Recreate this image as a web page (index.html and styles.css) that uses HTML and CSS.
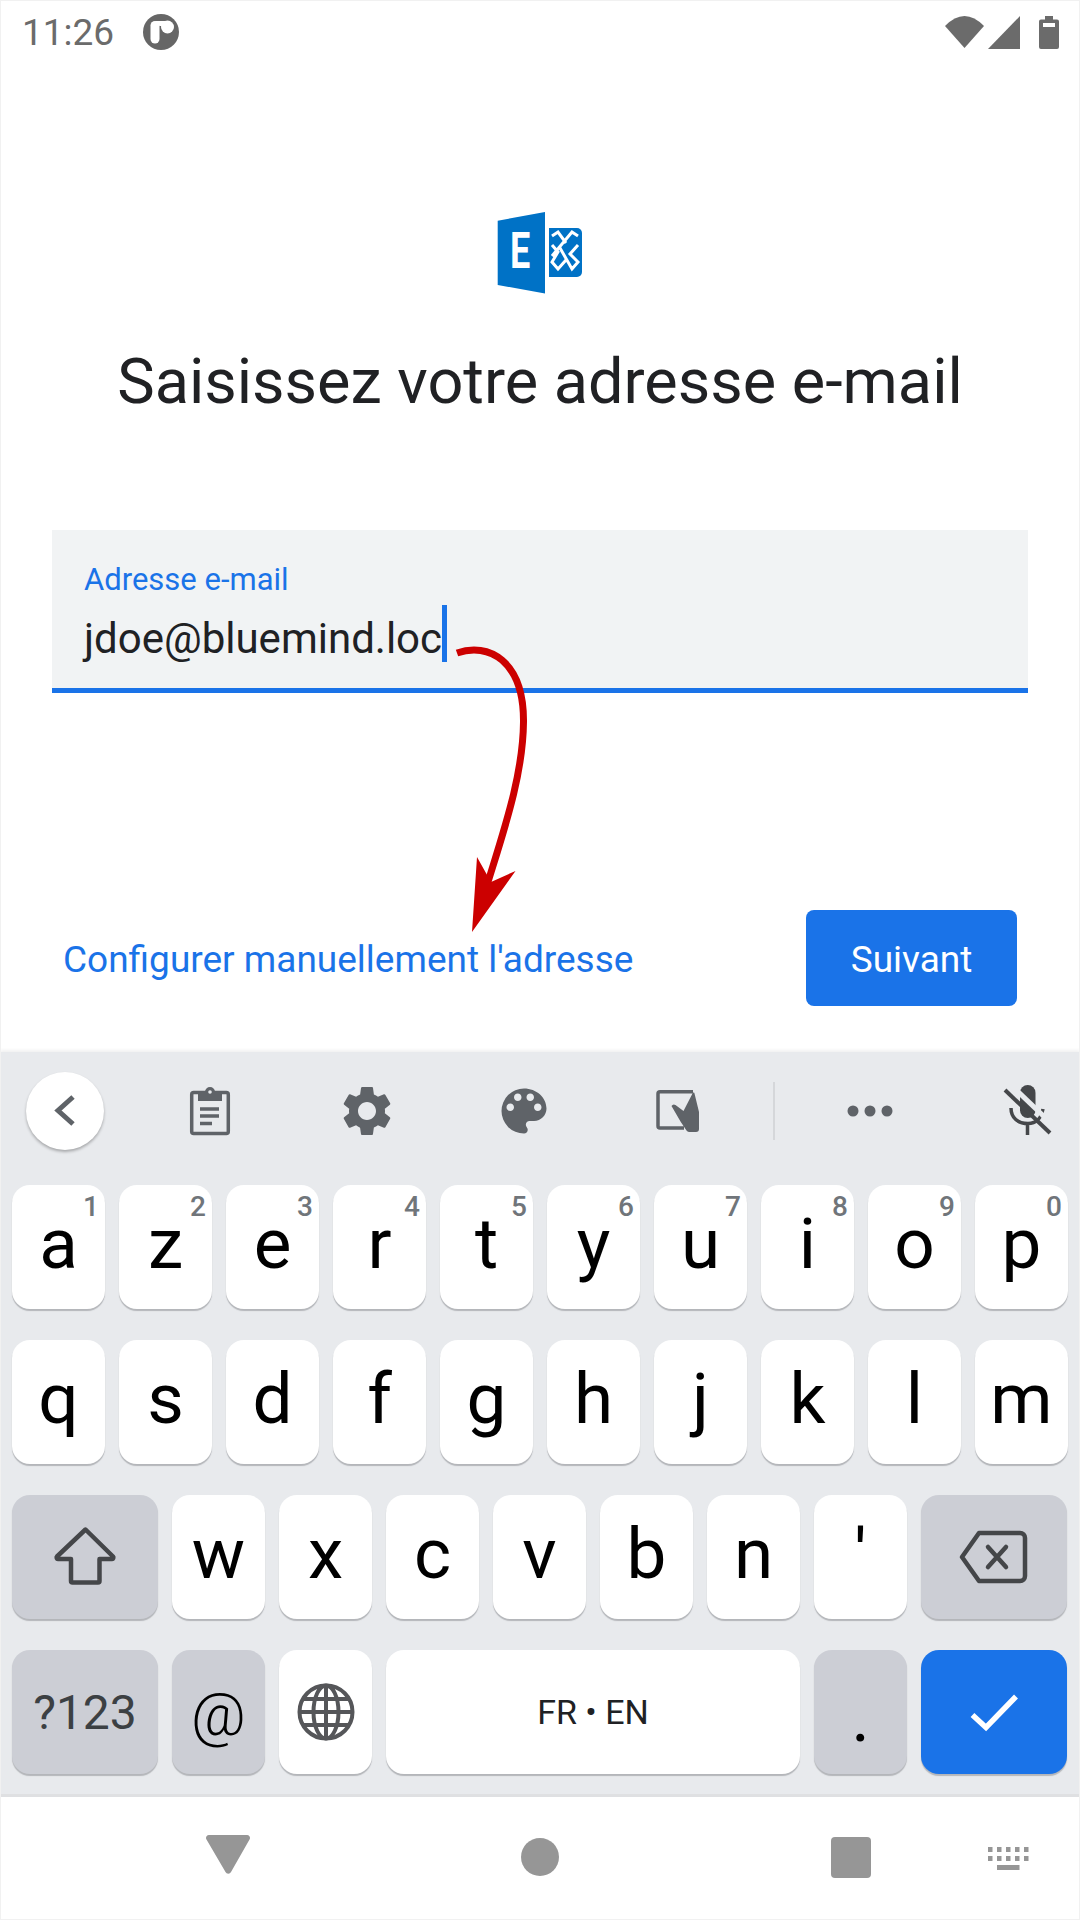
FILE: index.html
```html
<!DOCTYPE html>
<html lang="fr">
<head>
<meta charset="utf-8">
<title>Saisissez votre adresse e-mail</title>
<link rel="stylesheet" href="styles.css">
</head>
<body>
<div class="screen">
  <header class="status">
    <span class="time">11:26</span>
    <svg class="status-app" width="40" height="40" viewBox="141 12 40 40">
      <circle cx="161" cy="32" r="18" fill="#666"/>
      <rect x="150.500" y="21" width="9" height="22.500" rx="4.500" fill="#fff"/>
      <path d="M155 21h12v5h-7.500z" fill="#fff"/>
      <circle cx="167.500" cy="27" r="6.500" fill="#fff"/>
    </svg>
    <svg class="status-right" width="116" height="40" viewBox="944 10 116 40">
      <path d="M945 24Q964.500 4 984 24L964.500 46z" fill="#6b6b6b"/>
      <path d="M988 47L1020 14V47z" fill="#6b6b6b"/>
      <path d="M1045 14h8v3.500h4a2 2 0 0 1 2 2V45a2 2 0 0 1-2 2h-16a2 2 0 0 1-2-2V19.500a2 2 0 0 1 2-2h4z" fill="#6b6b6b"/>
      <rect x="1043" y="21" width="12" height="4" fill="#fff"/>
    </svg>
  </header>

  <main class="main">
    <svg class="logo" width="86" height="82" viewBox="497 212 86 82">
      <path d="M497.700 220.700L545 212V293.500L497.700 285z" fill="#0072c6"/>
      <text class="logo-e" transform="translate(510 268.400) scale(.72 1)">E</text>
      <path d="M549 228H577a5 5 0 0 1 5 5V272a5 5 0 0 1-5 5H549z" fill="#0072c6"/>
      <path d="M552 236L558 232L566 243M578 236L572 232L552 256M552 245L558 252L552 262L558 269L566 260M578 245L570 254L578 262L572 269L560 248" fill="none" stroke="#fff" stroke-width="3"/>
    </svg>
    <h1 class="title">Saisissez votre adresse e-mail</h1>

    <div class="field">
      <span class="field-label">Adresse e-mail</span>
      <div class="field-value">jdoe@bluemind.loc<span class="caret"></span></div>
    </div>

    <div class="actions">
      <a class="manual-link">Configurer manuellement l'adresse</a>
      <button class="next">Suivant</button>
    </div>
  </main>

  <section class="keyboard">
    <div class="toolbar">
      <div class="back">
        <svg width="40" height="40" viewBox="46 1091 40 40"><path d="M74 1097L59 1110.500L74 1124" fill="none" stroke="#5f6368" stroke-width="5"/></svg>
      </div>
      <svg class="tool tool-clip" width="60" height="60" viewBox="180 1081 60 60">
        <rect x="191.700" y="1092.500" width="36.600" height="41" rx="2" fill="none" stroke="#5f6368" stroke-width="3.500"/>
        <path d="M198 1092h7a5 5 0 0 1 10 0h7v9h-24z" fill="#5f6368"/>
        <circle cx="210" cy="1092" r="1.800" fill="#e8eaed"/>
        <path d="M200 1109h19M200 1116h19M200 1123.500h12" stroke="#5f6368" stroke-width="3.500"/>
      </svg>
      <svg class="tool" width="60" height="60" viewBox="0 0 24 24"><path fill="#5f6368" d="M19.140 12.940c.04-.3.06-.61.06-.94 0-.32-.02-.64-.07-.94l2.030-1.580c.18-.14.23-.41.12-.61l-1.920-3.320c-.12-.22-.37-.29-.59-.22l-2.390.96c-.5-.38-1.030-.7-1.620-.94l-.36-2.540c-.04-.24-.24-.41-.48-.41h-3.840c-.24 0-.43.17-.47.41l-.36 2.540c-.59.24-1.130.57-1.620.94l-2.390-.96c-.22-.08-.47 0-.59.22L2.740 8.870c-.12.21-.08.47.12.61l2.030 1.580c-.05.3-.09.63-.09.94s.02.64.07.94l-2.030 1.580c-.18.14-.23.41-.12.61l1.920 3.320c.12.22.37.29.59.22l2.390-.96c.5.38 1.030.7 1.620.94l.36 2.540c.05.24.24.41.48.41h3.840c.24 0 .44-.17.47-.41l.36-2.540c.59-.24 1.130-.56 1.620-.94l2.390.96c.22.08.47 0 .59-.22l1.920-3.320c.12-.22.07-.47-.12-.61l-2.010-1.580zM12 15.600c-1.980 0-3.600-1.620-3.600-3.600s1.620-3.600 3.600-3.600 3.600 1.620 3.600 3.600-1.620 3.600-3.600 3.600z"/></svg>
      <svg class="tool" width="60" height="60" viewBox="0 0 24 24"><path fill="#5f6368" d="M12 3a9 9 0 0 0 0 18c.83 0 1.500-.67 1.500-1.500 0-.39-.15-.74-.39-1.010-.23-.26-.38-.61-.38-.99 0-.83.67-1.500 1.500-1.500H16c2.760 0 5-2.240 5-5 0-4.420-4.030-8-9-8zm-5.500 9c-.83 0-1.500-.67-1.500-1.500S5.670 9 6.500 9 8 9.670 8 10.500 7.330 12 6.500 12zm3-4C8.670 8 8 7.330 8 6.500S8.670 5 9.500 5s1.500.67 1.500 1.500S10.330 8 9.500 8zm5 0c-.83 0-1.500-.67-1.500-1.500S13.670 5 14.500 5s1.500.67 1.500 1.500S15.330 8 14.500 8zm3 4c-.83 0-1.500-.67-1.500-1.500S16.670 9 17.500 9s1.500.67 1.500 1.500-.67 1.500-1.500 1.500z"/></svg>
      <svg class="tool tool-touch" width="60" height="60" viewBox="650 1081 60 60">
        <path d="M693 1091.700H660a2 2 0 0 0-2 2V1126a2 2 0 0 0 2 2H684" fill="none" stroke="#5f6368" stroke-width="3.500"/>
        <path d="M671.500 1106a3 3 0 0 1 4-1l8 6 9-17.500a1 1 0 0 1 2 0L699 1112V1129a3 3 0 0 1-3 3H689a3 3 0 0 1-2.500-1.500l-6-9z" fill="#5f6368"/>
      </svg>
      <span class="separator"></span>
      <svg class="tool tool-dots" width="60" height="60" viewBox="840 1081 60 60">
        <circle cx="853" cy="1111" r="5.500" fill="#5f6368"/><circle cx="870" cy="1111" r="5.500" fill="#5f6368"/><circle cx="887" cy="1111" r="5.500" fill="#5f6368"/>
      </svg>
      <svg class="tool tool-mic" width="60" height="60" viewBox="998 1081 60 60">
        <rect x="1020" y="1085" width="15.500" height="33" rx="7.700" fill="#45474a"/>
        <path d="M1011 1108c0 10 7 15.500 17 15.500 9 0 13-5 15-14.500M1027.500 1123v12" fill="none" stroke="#45474a" stroke-width="3.500"/>
        <path d="M1012 1086L1056 1128" stroke="#e8eaed" stroke-width="5"/>
        <path d="M1005 1090L1050 1133" stroke="#45474a" stroke-width="4"/>
      </svg>
    </div>

    <div class="rows">
      <div class="row">
        <div class="key">a<span class="hint">1</span></div>
        <div class="key">z<span class="hint">2</span></div>
        <div class="key">e<span class="hint">3</span></div>
        <div class="key">r<span class="hint">4</span></div>
        <div class="key">t<span class="hint">5</span></div>
        <div class="key">y<span class="hint">6</span></div>
        <div class="key">u<span class="hint">7</span></div>
        <div class="key">i<span class="hint">8</span></div>
        <div class="key">o<span class="hint">9</span></div>
        <div class="key">p<span class="hint">0</span></div>
      </div>
      <div class="row">
        <div class="key">q</div><div class="key">s</div><div class="key">d</div><div class="key">f</div><div class="key">g</div>
        <div class="key">h</div><div class="key">j</div><div class="key">k</div><div class="key">l</div><div class="key">m</div>
      </div>
      <div class="row">
        <div class="key key-wide key-fn">
          <svg width="70" height="70" viewBox="50 1521 70 70"><path d="M85.500 1528.500L57 1555.500a1.500 1.500 0 0 0 1 2.500H71V1580a1.500 1.500 0 0 0 1.500 1.500H98a1.500 1.500 0 0 0 1.500-1.500V1558H112a1.500 1.500 0 0 0 1-2.500z" fill="none" stroke="#444649" stroke-width="4.500" stroke-linejoin="round"/></svg>
        </div>
        <div class="key">w</div><div class="key">x</div><div class="key">c</div><div class="key">v</div><div class="key">b</div><div class="key">n</div>
        <div class="key key-apos">'</div>
        <div class="key key-wide key-fn">
          <svg width="76" height="70" viewBox="956 1524 76 70"><path d="M979 1535H1020a5 5 0 0 1 5 5V1578a5 5 0 0 1-5 5H979L962 1559z" fill="none" stroke="#444649" stroke-width="4.500" stroke-linejoin="round"/><path d="M988 1549L1006 1569M1006 1549L988 1569" stroke="#444649" stroke-width="4.500" stroke-linecap="round"/></svg>
        </div>
      </div>
      <div class="row">
        <div class="key key-wide key-fn key-sym">?123</div>
        <div class="key key-fn key-at">@</div>
        <div class="key key-icon">
          <svg width="60" height="60" viewBox="295 1681 60 60" fill="none" stroke="#555659" stroke-width="4">
            <circle cx="325" cy="1711" r="26.500"/><ellipse cx="325" cy="1711" rx="12.500" ry="26.500"/>
            <path d="M325 1685V1737M299 1711H351M303 1698H347M303 1724H347"/>
          </svg>
        </div>
        <div class="key key-space">FR • EN</div>
        <div class="key key-fn key-dot">.</div>
        <div class="key key-wide key-done">
          <svg width="60" height="50" viewBox="965 1686 60 50"><path d="M973.500 1714L987 1726.500L1017 1695.500" fill="none" stroke="#fff" stroke-width="5.500"/></svg>
        </div>
      </div>
    </div>
  </section>

  <nav class="nav">
    <svg class="nav-back" width="44" height="40" viewBox="206 1835 44 40"><path d="M209 1835H247a3 3 0 0 1 2.800 4L231 1872a3 3 0 0 1-5.500 0L206.200 1839a3 3 0 0 1 2.800-4z" fill="#969696"/></svg>
    <svg class="nav-home" width="38" height="38" viewBox="0 0 38 38"><circle cx="19" cy="19" r="19" fill="#969696"/></svg>
    <svg class="nav-recent" width="40" height="41" viewBox="0 0 40 41"><rect width="40" height="41" rx="4" fill="#969696"/></svg>
    <svg class="nav-kbd" width="41" height="24" viewBox="0 0 41 24" fill="#969696">
      <rect x="0" y="0" width="4.500" height="5"/><rect x="9" y="0" width="4.500" height="5"/><rect x="18" y="0" width="4.500" height="5"/><rect x="27" y="0" width="4.500" height="5"/><rect x="36" y="0" width="4.500" height="5"/>
      <rect x="0" y="9" width="4.500" height="5"/><rect x="9" y="9" width="4.500" height="5"/><rect x="18" y="9" width="4.500" height="5"/><rect x="27" y="9" width="4.500" height="5"/><rect x="36" y="9" width="4.500" height="5"/>
      <rect x="9" y="18" width="22.500" height="5"/>
    </svg>
  </nav>

  <svg class="annotation" width="90" height="300" viewBox="450 640 90 300">
    <path d="M457 653C488 642 524 660 523.500 722C523 775 504 830 488 882" fill="none" stroke="#cc0000" stroke-width="7"/>
    <path d="M477 857L491 882L515.500 871L472 932z" fill="#cc0000"/>
  </svg>
</div>
</body>
</html>
```
FILE: styles.css
```css
* { box-sizing: border-box; }
html, body { margin: 0; padding: 0; }
body { background: #fff; font-family: Roboto, "Liberation Sans", sans-serif; }

.screen {
  position: relative;
  width: 1080px;
  height: 1920px;
  display: flex;
  flex-direction: column;
  background: #fff;
  overflow: hidden;
  outline: 1px solid #f1f1f1;
  outline-offset: -1px;
}

.status {
  height: 64px;
  flex: none;
  display: flex;
  align-items: center;
  padding: 0 20px 0 22px;
}
.time { font-size: 37px; color: #6b6b6b; letter-spacing: 0; }
.status-app { margin-left: 27px; }
.status-right { margin-left: auto; }

.main {
  flex: 1;
  display: flex;
  flex-direction: column;
  align-items: stretch;
}
.logo { align-self: center; margin: 148px 0 0; }
.title {
  margin: 48px 0 0;
  text-align: center;
  font-size: 63px;
  font-weight: 400;
  line-height: 80px;
  color: #202124;
}
.field {
  margin: 108px 52px 0;
  height: 163px;
  background: #f1f3f4;
  border-bottom: 5px solid #1a73e8;
  padding: 31px 32px 0;
}
.field-label { display: block; font-size: 31px; line-height: 38px; color: #1a73e8; }
.field-value {
  display: flex;
  align-items: center;
  margin-top: 11px;
  font-size: 42px;
  line-height: 58px;
  color: #202124;
}
.caret { width: 5px; height: 57px; background: #1a73e8; margin-top: -12px; }

.actions {
  margin: 217px 63px 0 63px;
  display: flex;
  align-items: center;
  justify-content: space-between;
}
.manual-link { font-size: 37px; color: #1a73e8; margin-top: 2px; }
.next {
  width: 211px;
  height: 96px;
  border: 0;
  border-radius: 8px;
  background: #1a73e8;
  color: #fff;
  font-family: inherit;
  font-size: 37px;
  font-weight: 400;
  padding: 2px 0 0;
}

.keyboard {
  flex: none;
  height: 745px;
  background: #e8eaed;
  border-bottom: 3px solid #dfe0e2;
  box-shadow: 0 -2px 3px rgba(0, 0, 0, .06);
}
.toolbar {
  height: 118px;
  display: flex;
  align-items: center;
  padding-left: 26px;
}
.back {
  width: 78px;
  height: 78px;
  border-radius: 50%;
  background: #fff;
  box-shadow: 0 2px 3px rgba(0, 0, 0, .28);
  display: flex;
  align-items: center;
  justify-content: center;
}
.tool { margin-left: 97px; flex: none; }
.tool-clip { margin-left: 76px; }
.tool-touch { margin-left: 96px; }
.tool-dots { margin-left: 65px; }
.tool-mic { margin-left: 98px; }
.separator { width: 2px; height: 58px; margin-left: 63px; background: #d5d7da; }

.rows {
  margin-top: 15px;
  padding: 0 12px;
  display: flex;
  flex-direction: column;
  gap: 31px;
}
.row { display: flex; gap: 14px; }
.key {
  position: relative;
  flex: none;
  width: 93px;
  height: 124px;
  padding-top: 23px;
  border-radius: 18px;
  background: #fff;
  box-shadow: 0 2px 1px #b4b6ba;
  display: flex;
  justify-content: center;
  font-size: 71px;
  line-height: 71px;
  color: #000;
}
.hint {
  position: absolute;
  top: 6px;
  right: 6px;
  font-size: 28px;
  line-height: 32px;
  font-weight: 500;
  color: #70757a;
}
.key-wide { width: 146px; }
.key-fn { background: #ccced5; }
.key-wide.key-fn, .key-icon, .key-done { padding-top: 0; align-items: center; }
.key-sym { font-size: 48px; color: #3c4043; }
.key-at { font-size: 60px; font-weight: 300; padding-top: 29px; }
.key-space {
  width: 414px;
  padding-top: 0;
  align-items: center;
  font-size: 34px;
  color: #202124;
}
.key-dot { padding-top: 31px; }
.key-done { background: #1a73e8; }

.nav {
  flex: none;
  height: 123px;
  display: flex;
  align-items: center;
  padding-left: 206px;
}
.nav-back { margin-top: -8px; }
.nav-home { margin-left: 271px; margin-top: -3px; }
.nav-recent { margin-left: 272px; margin-top: -3px; }
.nav-kbd { margin-left: 117px; }

.annotation { position: absolute; left: 450px; top: 640px; }
.logo-e { font: 700 50px Roboto, "Liberation Sans", sans-serif; fill: #fff; }
```
